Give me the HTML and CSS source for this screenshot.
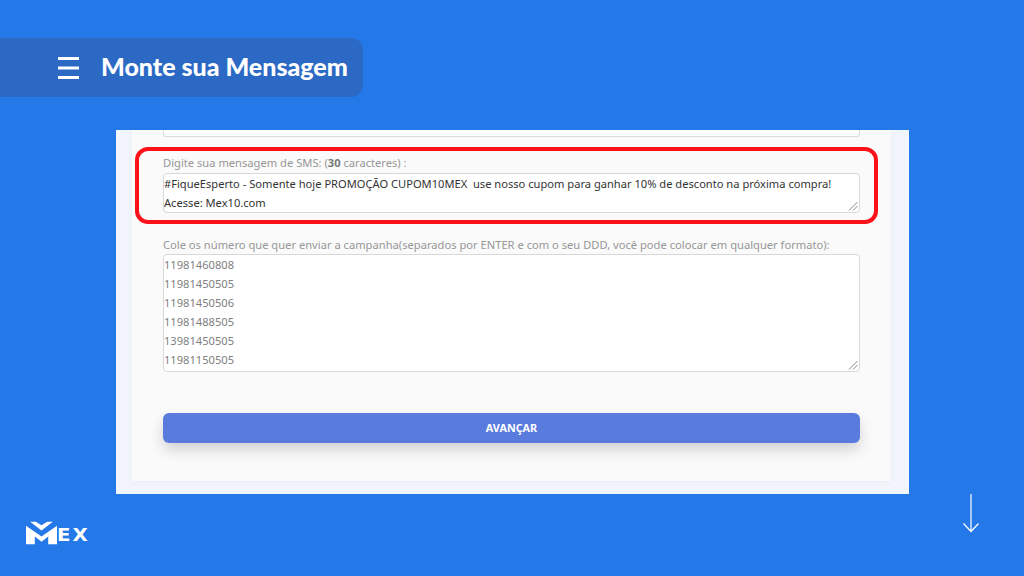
FILE: index.html
```html
<!DOCTYPE html>
<html lang="pt">
<head>
<meta charset="utf-8">
<title>Monte sua Mensagem</title>
<link rel="stylesheet" href="styles.css">
</head>
<body>
<div class="slide">
  <header class="title-bar">
    <svg class="menu-icon" width="21" height="22" viewBox="0 0 21 22"><path d="M0 1.5H21M0 11H21M0 20.5H21" stroke="#fff" stroke-width="3" fill="none"/></svg>
    <h1 class="title">Monte sua Mensagem</h1>
  </header>
  <section class="shot">
    <div class="card">
      <div class="stub"></div>
      <label class="label label-sms">Digite sua mensagem de SMS: (<b>30</b> caracteres) :</label>
      <div class="area area-sms">
        <div>#FiqueEsperto - Somente hoje PROMOÇÃO CUPOM10MEX&nbsp; use nosso cupom para ganhar 10% de desconto na próxima compra!<br>Acesse: Mex10.com</div>
        <svg class="grip" width="10" height="10" viewBox="0 0 10 10"><path d="M1 9.5L9.5 1M5 9.5L9.5 5" stroke="#888" stroke-width="1" fill="none"/></svg>
      </div>
      <label class="label label-num">Cole os número que quer enviar a campanha(separados por ENTER e com o seu DDD, você pode colocar em qualquer formato):</label>
      <div class="area area-num">
        <div>11981460808<br>11981450505<br>11981450506<br>11981488505<br>13981450505<br>11981150505</div>
        <svg class="grip" width="10" height="10" viewBox="0 0 10 10"><path d="M1 9.5L9.5 1M5 9.5L9.5 5" stroke="#888" stroke-width="1" fill="none"/></svg>
      </div>
      <button class="submit" type="button">AVANÇAR</button>
    </div>
    <div class="highlight"></div>
  </section>
  <footer class="foot">
    <div class="logo">
      <svg width="31" height="24" viewBox="0 0 30 22"><path d="M4 0H9.5L15 3.6L20.500 0H26L15 8.500Z" fill="#fff"/><path d="M0 4L15 14.500L30 4V22H21.500V14.500L15 19.500L8.500 14.500V22H0Z" fill="#fff"/></svg>
      <span class="logo-text">EX</span>
    </div>
    <svg class="arrow" width="18" height="39" viewBox="0 0 18 39"><path d="M9 0V37.500M1.500 29.500L9 37.500L16.500 29.500" stroke="#fff" stroke-width="1.200" fill="none"/></svg>
  </footer>
</div>
</body>
</html>
```
FILE: styles.css
```css
* { box-sizing: border-box; }
html, body { margin: 0; padding: 0; }
body { width: 1024px; height: 576px; overflow: hidden; background: #2478e8; font-family: "Noto Sans", sans-serif; }
.slide { display: flex; flex-direction: column; height: 576px; padding-top: 38px; }
.title-bar { display: flex; align-items: center; gap: 22px; width: 363px; height: 59px; padding-left: 58px; background: #2b69c4; border-radius: 0 12px 12px 0; }
.menu-icon { flex: none; }
.title { margin: 0 0 3px; color: #fff; font-family: "Lato", sans-serif; font-weight: 900; font-size: 25px; white-space: nowrap; }
.shot { position: relative; align-self: flex-start; width: 793px; height: 364px; margin: 33px 0 0 116px; padding: 0 18px 13px 16px; background: #f2f5fb; }
.card { display: flex; flex-direction: column; height: 100%; padding: 0 31px; background: #fafafa; box-shadow: 0 2px 6px rgba(30,70,160,.04); }
.stub { height: 7px; background: #fff; border: 1px solid #dcdcdc; border-top: 0; border-radius: 0 0 3px 3px; flex: none; }
.label { display: block; color: #979797; font-size: 11.17px; line-height: 16px; white-space: nowrap; }
.label b { color: #777; }
.label-sms { margin-top: 18px; }
.label-num { margin-top: 24px; }
.area { position: relative; flex: none; background: #fff; border: 1px solid #d8d8d8; border-radius: 4px; font-size: 11.13px; line-height: 19px; white-space: nowrap; }
.area-sms { height: 40px; margin-top: 2px; color: #333; }
.area-num { height: 118px; margin-top: 1px; color: #808080; }
.grip { position: absolute; right: 1px; bottom: 1px; }
.submit { flex: none; height: 30px; margin-top: 41px; padding: 0 0 2px; color: #fff; background: #5a7bde; border: 0; border-radius: 6px; font-family: inherit; font-size: 10.8px; font-weight: 700; box-shadow: 0 7px 14px rgba(0,0,0,.16); }
.highlight { position: absolute; left: 19px; top: 17px; width: 743px; height: 77px; border: 4px solid #fb1218; border-radius: 13px; }
.foot { display: flex; justify-content: space-between; align-items: flex-start; padding: 0 44px 0 26px; }
.logo { display: flex; align-items: flex-start; margin-top: 27px; }
.logo-text { margin-top: 7px; color: #fff; font-family: "DejaVu Sans", sans-serif; font-weight: 700; font-size: 17.5px; letter-spacing: 1.800px; line-height: 14px; transform: scaleX(1.13); transform-origin: left; }
.arrow { flex: none; }
```
